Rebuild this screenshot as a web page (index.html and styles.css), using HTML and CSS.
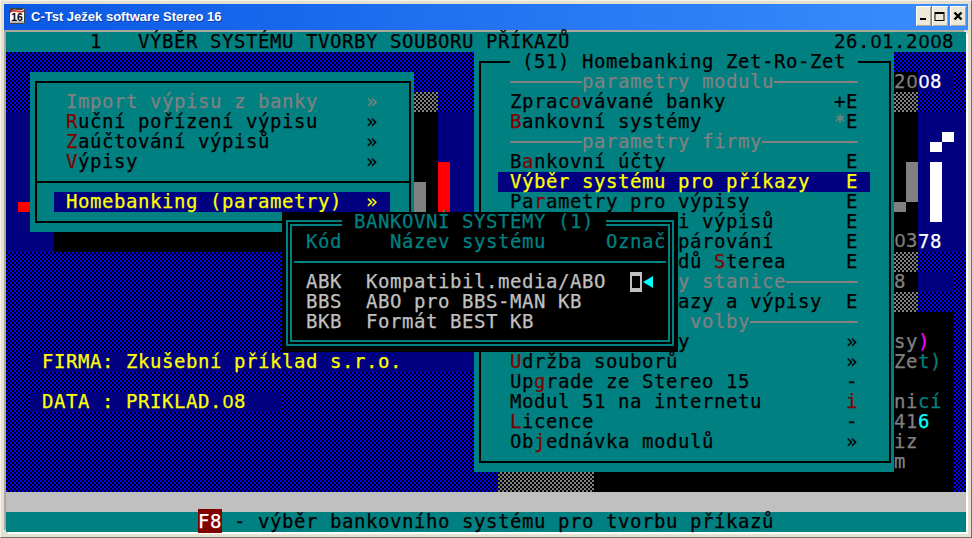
FILE: index.html
```html
<!DOCTYPE html>
<html lang="cs">
  <head>
    <meta charset="UTF-8" />
    <title>C-Tst Ježek software Stereo 16</title>
    <link rel="stylesheet" href="styles.css">
  </head>
  <body>
    <div class="window">
      <div class="titlebar">
        <svg class="app-icon" width="16" height="16" viewBox="0 0 16 16">
          <rect x="0.5" y="0.5" width="15" height="15" rx="1" fill="#fff" stroke="#404040" />
          <path d="M1 5 Q4 0 8 2 Q12 3 15 1 L15 1 L1 1 Z" fill="#404040" />
          <path d="M1 4.5 Q4 0.5 8 2.5 Q12 3.5 15 2 L15 4 Q11 5 8 4 Q4 3 1 5 Z" fill="#e03020" />
          <rect x="1" y="13" width="14" height="2" fill="#b8b8b8" />
          <text x="8" y="13" text-anchor="middle" class="app-icon-text">16</text>
        </svg>
        <span class="title-text">C-Tst Ježek software Stereo 16</span>
        <div class="title-buttons">
          <div class="title-button btn-min">
            <svg width="15" height="20" viewBox="0 0 15 20"><rect x="4" y="12" width="6" height="2" fill="#000" /></svg>
          </div>
          <div class="title-button">
            <svg width="16" height="20" viewBox="0 0 16 20"><path d="M2.5 6h10v9h-10z M3.5 8v6h8V8z" fill="#000" fill-rule="evenodd" /></svg>
          </div>
          <div class="title-button btn-close">
            <svg width="16" height="20" viewBox="0 0 16 20"><path d="M4.5 6.5l7 7M11.5 6.5l-7 7" stroke="#000" stroke-width="2.4" /></svg>
          </div>
        </div>
      </div>

      <div class="screen">
        <div class="head-row">
          <span>1   VÝBĚR SYSTÉMU TVORBY SOUBORU PŘÍKAZŮ</span>
          <span>26.<span class="zero">0</span>1.2<span class="zero">0</span><span class="zero">0</span>8</span>
        </div>
        <div class="desk"></div>

        <!-- what shows of the windows lying behind -->
        <div class="navy-left"></div>
        <div class="mark-red"></div>
        <div class="shadow-left"></div>
        <div class="check-mid"></div>
        <div class="black-mid"></div>
        <div class="navy-mid"></div>
        <div class="bar-red"></div>
        <div class="bar-gray"></div>

        <div class="firma-bar">FIRMA: Zkušební příklad s.r.o.</div>
        <div class="data-bar">DATA : PRIKLAD.<span class="zero">0</span>8</div>

        <div class="side-20">2<span class="zero">0</span></div>
        <div class="side-08"><span class="zero">0</span>8</div>
        <div class="check-side-a"></div>
        <div class="side-03"><span><span class="zero">0</span>3</span></div>
        <div class="side-78"><span>78</span></div>
        <div class="bar-gray-b"></div>
        <div class="bar-gray-c"></div>
        <div class="logo-stem"></div>
        <div class="logo-dot-a"></div>
        <div class="logo-dot-b"></div>
        <div class="check-side-b"></div>
        <div class="side-8">8</div>
        <div class="navy-8"></div>
        <div class="check-side-c"></div>
        <div class="side-notes">
          <div>sy<span class="magenta">)</span></div>
          <div>Ze<span class="teal">t)</span></div>
          <div>&nbsp;</div>
          <div>ni<span class="teal">cí</span></div>
          <div>41<span class="cyan">6</span></div>
          <div>iz</div>
          <div>m</div>
        </div>
        <div class="check-bottom"></div>
        <div class="shadow-bottom"></div>

        <!-- left menu -->
        <div class="menu-left">
          <div class="frame frame-left">
            <div class="row off"><span>Import výpisu z banky</span><span class="arrow">»</span></div>
            <div class="row"><span><span class="hot">R</span>uční pořízení výpisu</span><span class="arrow">»</span></div>
            <div class="row"><span><span class="hot">Z</span>aúčtování výpisů</span><span class="arrow">»</span></div>
            <div class="row"><span><span class="hot">V</span>ýpisy</span><span class="arrow">»</span></div>
            <hr class="line-black" />
            <div class="row selected"><span>Homebanking (parametry)</span><span class="arrow">»</span></div>
          </div>
        </div>

        <!-- module menu -->
        <div class="menu-right">
          <div class="frame frame-right">
            <div class="frame-title">(51) Homebanking Zet-Ro-Zet</div>
            <div class="section"><span class="rule rule-start"></span><span>parametry modulu</span><span class="rule"></span></div>
            <div class="row"><span>Zprac<span class="hot">o</span>vávané banky</span><span>+E</span></div>
            <div class="row"><span><span class="hot">B</span>ankovní systémy</span><span><span class="off">*</span>E</span></div>
            <div class="section"><span class="rule rule-start"></span><span>parametry firmy</span><span class="rule"></span></div>
            <div class="row"><span>B<span class="hot">a</span>nkovní účty</span><span>E</span></div>
            <div class="row selected"><span>Výběr systému pro příkazy</span><span>E</span></div>
            <div class="row"><span>Pa<span class="hot">r</span>ametry pro výpisy</span><span>E</span></div>
            <div class="row"><span class="cut">i výpisů</span><span>E</span></div>
            <div class="row"><span class="cut">párování</span><span>E</span></div>
            <div class="row"><span class="cut">dů <span class="hot">S</span>terea</span><span>E</span></div>
            <div class="section"><span class="rule rule-start"></span><span class="cut-stanice">y stanice</span><span class="rule"></span></div>
            <div class="row"><span class="cut">azy a výpisy</span><span>E</span></div>
            <div class="section"><span class="rule rule-start"></span><span class="cut-section">volby</span><span class="rule"></span></div>
            <div class="row"><span class="cut">y</span><span class="arrow">»</span></div>
            <div class="row"><span><span class="hot">Ú</span>držba souborů</span><span class="arrow">»</span></div>
            <div class="row"><span>Up<span class="hot">g</span>rade ze Stereo 15</span><span>-</span></div>
            <div class="row"><span>Modul 51 na internetu</span><span class="hot">i</span></div>
            <div class="row"><span><span class="hot">L</span>icence</span><span>-</span></div>
            <div class="row"><span>Ob<span class="hot">j</span>ednávka modulů</span><span class="arrow">»</span></div>
          </div>
        </div>

        <!-- bank systems list -->
        <div class="popup">
          <div class="double-outer">
            <div class="double-inner">
              <div class="popup-title">BANKOVNÍ SYSTÉMY (1)</div>
              <div class="popup-head"><span>Kód</span><span>Název systému</span><span>Označ</span></div>
              <hr class="line-teal" />
              <div class="popup-row">
                <span>ABK</span><span>Kompatibil.media/ABO</span>
                <span class="picked"><span class="picked-box"></span><span class="picked-arrow"></span></span>
              </div>
              <div class="popup-row"><span>BBS</span><span>ABO pro BBS-MAN KB</span></div>
              <div class="popup-row"><span>BKB</span><span>Formát BEST KB</span></div>
            </div>
          </div>
        </div>

        <div class="grey-row"></div>
        <div class="status-row"><span class="f-key">F8</span> - výběr bankovního systému pro tvorbu příkazů</div>
      </div>
    </div>
  </body>
</html>
```

FILE: styles.css
```css
body {
  margin: 0;
  padding: 0;
  background-color: #ece9d8;
}

/* Window frame */
.window {
  box-sizing: border-box;
  width: 972px;
  height: 538px;
  padding: 3px 3px 3px 3px;
  border: 1px solid;
  border-color: #f4f2e8 #716f64 #716f64 #f4f2e8;
  background-color: #e4e1d0;
  overflow: hidden;
}
.titlebar {
  display: flex;
  align-items: flex-start;
  height: 26px;
  padding-left: 5px;
  background: linear-gradient(to right, #0a58e4, #3c8efe);
}
.app-icon {
  margin-top: 4px;
}
.app-icon-text {
  font-family: "Liberation Sans", sans-serif;
  font-size: 10.5px;
  font-weight: bold;
  fill: #000;
}
.title-text {
  margin-left: 6px;
  font-family: "Liberation Sans", Arial, sans-serif;
  font-size: 13px;
  font-weight: bold;
  line-height: 25px;
  color: white;
  text-shadow: 1px 1px 0 #0a3fa8;
}
.title-buttons {
  display: flex;
  gap: 1px;
  margin-left: auto;
  margin-top: 2px;
  margin-right: 2px;
}
.title-button {
  display: flex;
  width: 16px;
  height: 20px;
  background-color: #ece9d8;
  box-shadow: inset 1px 1px 0 #fff, inset -1px -1px 0 #aca899;
}
.btn-min {
  width: 15px;
}
.btn-close {
  margin-left: 1px;
}

/* Text screen: 80 columns of 12px, 50 half rows of 10px */
.screen {
  display: grid;
  grid-template-columns: repeat(80, 12px);
  grid-template-rows: repeat(50, 10px);
  width: 960px;
  height: 500px;
  margin-top: 2px;
  margin-left: 2px;
  font-family: "DejaVu Sans Mono", "Liberation Mono", monospace;
  font-size: 19px;
  letter-spacing: 0.56px;
  line-height: 18px;
  -webkit-text-stroke: 0.25px currentColor;
  white-space: nowrap;
  color: black;
  box-shadow: 2px 2px 0 #fff, -2px -2px 0 #aca899;
}
.zero {
  display: inline-block;
  width: 12px;
  font-family: "Liberation Sans", sans-serif;
  letter-spacing: 0;
  text-align: center;
}
.arrow {
  -webkit-text-stroke: 0;
}
.head-row {
  grid-area: 1 / 1 / 3 / 81;
  display: flex;
  justify-content: space-between;
  padding: 0 12px 0 84px;
  background-color: #008080;
  white-space: pre;
}
.desk {
  grid-area: 3 / 1 / 47 / 81;
  background: conic-gradient(#0000ff 25%, #000 0 50%, #0000ff 0 75%, #000 0) 0 0 / 4px 4px;
}
.grey-row {
  grid-area: 47 / 1 / 49 / 81;
  background-color: #c0c0c0;
}
.status-row {
  grid-area: 49 / 1 / 51 / 81;
  padding-left: 192px;
  background-color: #008080;
}
.f-key {
  padding: 1px 0;
  background-color: #800000;
  color: white;
}

/* Behind the windows */
.check-mid,
.check-side-a,
.check-side-b,
.check-side-c,
.check-bottom {
  background: conic-gradient(#808080 25%, #000 0 50%, #808080 0 75%, #000 0) 0 0 / 4px 4px;
}
.navy-left { grid-area: 9 / 1 / 23 / 5; background-color: #000080; }
.mark-red { grid-area: 18 / 2 / 19 / 3; background-color: #ff0000; }
.shadow-left { grid-area: 21 / 5 / 23 / 24; background-color: #000; }
.check-mid { grid-area: 7 / 35 / 9 / 37; }
.black-mid { grid-area: 9 / 35 / 19 / 37; background-color: #000; }
.navy-mid { grid-area: 9 / 37 / 19 / 40; background-color: #000080; }
.bar-red { grid-area: 14 / 37 / 19 / 38; background-color: #ff0000; }
.bar-gray { grid-area: 16 / 35 / 19 / 36; background-color: #808080; }

.firma-bar,
.data-bar {
  padding-left: 12px;
  background-color: #000080;
  color: #ffff00;
}
.firma-bar { grid-area: 33 / 3 / 35 / 40; }
.data-bar { grid-area: 37 / 3 / 39 / 24; }

.side-20,
.side-03,
.side-8 {
  background-color: #000;
  color: #808080;
}
.side-08,
.side-78 {
  background-color: #000080;
  color: white;
}
.side-20 { grid-area: 5 / 75 / 7 / 77; }
.side-08 { grid-area: 5 / 77 / 7 / 80; }
.check-side-a { grid-area: 7 / 75 / 9 / 77; }
.side-03 { grid-area: 9 / 75 / 23 / 77; display: flex; align-items: flex-end; padding-bottom: 2px; }
.side-78 { grid-area: 9 / 77 / 23 / 81; display: flex; align-items: flex-end; padding-bottom: 2px; }
.bar-gray-b { grid-area: 14 / 76 / 18 / 77; background-color: #808080; }
.bar-gray-c { grid-area: 18 / 75 / 19 / 76; background-color: #808080; }
.logo-stem { grid-area: 14 / 78 / 20 / 79; background-color: white; }
.logo-dot-a { grid-area: 12 / 78 / 13 / 79; background-color: white; }
.logo-dot-b { grid-area: 11 / 79 / 12 / 80; background-color: white; }
.check-side-b { grid-area: 23 / 75 / 25 / 77; }
.side-8 { grid-area: 25 / 75 / 27 / 77; }
.navy-8 { grid-area: 25 / 77 / 27 / 80; background-color: #000080; }
.check-side-c { grid-area: 27 / 75 / 29 / 77; }
.side-notes {
  grid-area: 29 / 75 / 47 / 80;
  padding-top: 20px;
  background-color: #000;
  color: #808080;
}
.side-notes div {
  height: 20px;
}
.check-bottom { grid-area: 45 / 42 / 47 / 50; }
.shadow-bottom { grid-area: 45 / 50 / 47 / 75; background-color: #000; }

.magenta { color: #ff00ff; }
.teal { color: #008080; }
.cyan { color: #00ffff; }

/* Teal menus */
.menu-left,
.menu-right {
  box-sizing: border-box;
  padding: 9px 3px 9px 5px;
  background-color: #008080;
}
.menu-left { grid-area: 5 / 3 / 21 / 35; }
.menu-right { grid-area: 3 / 40 / 45 / 75; }
.frame {
  box-sizing: border-box;
  height: 100%;
  border: 2px solid #000;
}
.frame-left {
  padding: 9px 0 0 17px;
}
.frame-right {
  padding-left: 17px;
}
.frame-title {
  width: fit-content;
  height: 20px;
  margin: -11px 0 0 12px;
  padding: 0 12px;
  background-color: #008080;
}
.row {
  display: flex;
  justify-content: space-between;
  height: 20px;
  padding: 0 12px;
}
.frame-left .row {
  width: 312px;
}
.frame-right .row {
  width: 348px;
}
.selected {
  background-color: #000080;
  color: #ffff00;
}
.off {
  color: #808080;
}
.hot {
  color: #800000;
}
.cut {
  margin-left: 168px;
}
.line-black {
  height: 2px;
  margin: 9px 0 9px -17px;
  border: none;
  background-color: #000;
}
.section {
  display: flex;
  align-items: center;
  width: 348px;
  height: 20px;
  margin-left: 12px;
  color: #808080;
}
.rule {
  flex: 1;
  height: 2px;
  background-color: #808080;
}
.rule-start {
  flex: none;
  width: 72px;
}
.section span:not(.rule) {
  height: 20px;
}
.cut-section {
  margin-left: 108px;
}
.cut-stanice {
  margin-left: 96px;
}

/* Black list window */
.popup {
  grid-area: 19 / 24 / 33 / 57;
  box-sizing: border-box;
  padding: 8px 4px 6px;
  background-color: #000;
  color: #c0c0c0;
}
.double-outer {
  box-sizing: border-box;
  height: 100%;
  padding: 2px;
  border: 2px solid #008080;
}
.double-inner {
  box-sizing: border-box;
  height: 100%;
  border: 2px solid #008080;
}
.popup-title {
  width: fit-content;
  height: 20px;
  margin: -14px 0 0 50px;
  padding: 0 12px;
  background-color: #000;
  color: #008080;
}
.popup-head,
.popup-row {
  display: grid;
  height: 20px;
  padding-left: 14px;
}
.popup-head {
  grid-template-columns: 84px 216px auto;
  color: #008080;
}
.popup-row {
  grid-template-columns: 60px 264px auto;
}
.line-teal {
  height: 2px;
  margin: 9px 2px;
  border: none;
  background-color: #008080;
}
.picked {
  display: flex;
  align-items: center;
}
.picked-box {
  box-sizing: border-box;
  width: 12px;
  height: 20px;
  border: solid #c0c0c0;
  border-width: 4px 2px;
}
.picked-arrow {
  width: 0;
  height: 0;
  margin-left: 1px;
  border-top: 6.5px solid transparent;
  border-bottom: 6.5px solid transparent;
  border-right: 10px solid #00ffff;
}
```
